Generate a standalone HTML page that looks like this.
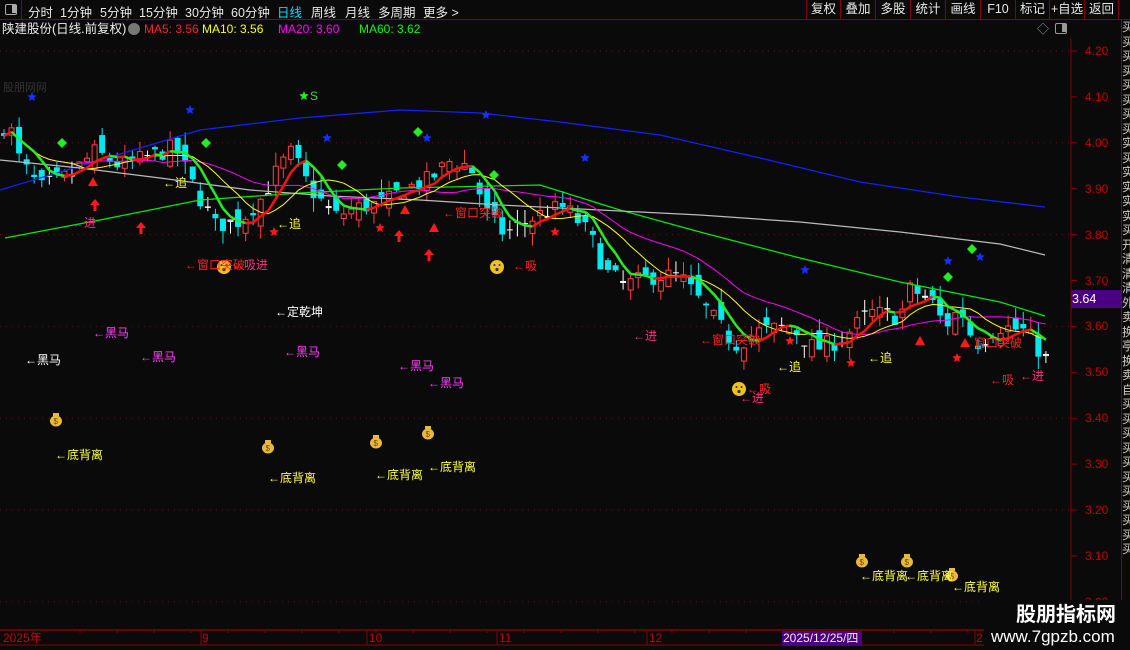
<!DOCTYPE html>
<html><head><meta charset="utf-8"><style>
*{margin:0;padding:0;box-sizing:border-box}
body{width:1130px;height:650px;background:#0a0a0a;overflow:hidden;position:relative;font-family:"Liberation Sans","Noto Sans CJK SC",sans-serif;font-size:12px;color:#ddd}
.top{position:absolute;left:0;top:0;width:1130px;height:20px;border-bottom:1px solid #8b0000}
.top span{position:absolute;top:2px;font-size:12.5px;color:#e8e8e8}
.rb{position:absolute;top:0;height:20px;border-left:1px solid #8b0000;color:#e8e8e8;font-size:12.5px;text-align:center;line-height:19px}
.a{position:absolute;white-space:nowrap;font-size:12px;line-height:12px}
.ax{position:absolute;left:1085px;color:#c00000;font-size:12px}
svg{position:absolute;left:0;top:0}
</style></head><body>
<div class="top">
<div style="position:absolute;left:0;top:0;width:22px;height:20px;border-right:1px solid #8b0000"><div style="position:absolute;left:5px;top:4px;width:12px;height:11px;border:1.5px solid #aaa;border-radius:2px"><div style="position:absolute;right:0;top:0;width:4px;height:8px;background:#aaa"></div></div></div>
<span style="left:28px">分时</span><span style="left:60px">1分钟</span><span style="left:100px">5分钟</span><span style="left:139px">15分钟</span><span style="left:185px">30分钟</span><span style="left:231px">60分钟</span><span style="left:277px;color:#00e0ff">日线</span><span style="left:311px">周线</span><span style="left:345px">月线</span><span style="left:378px">多周期</span><span style="left:423px">更多 &gt;</span>
<div class="rb" style="left:806px;width:34px">复权</div><div class="rb" style="left:840px;width:35px">叠加</div><div class="rb" style="left:875px;width:35px">多股</div><div class="rb" style="left:910px;width:35px">统计</div><div class="rb" style="left:945px;width:35px">画线</div><div class="rb" style="left:980px;width:35px">F10</div><div class="rb" style="left:1015px;width:34px">标记</div><div class="rb" style="left:1049px;width:35px">+自选</div><div class="rb" style="left:1084px;width:35px;border-right:1px solid #8b0000">返回</div>
</div>
<div class="a" style="left:2px;top:23px;font-size:12.5px;color:#eee">陕建股份(日线.前复权)</div>
<div style="position:absolute;left:128px;top:23px;width:12px;height:12px;border-radius:50%;background:#777"></div>
<div class="a" style="left:144px;top:23px;color:#ff2020">MA5: 3.56</div>
<div class="a" style="left:202px;top:23px;color:#ffff00">MA10: 3.56</div>
<div class="a" style="left:278px;top:23px;color:#ff00ff">MA20: 3.60</div>
<div class="a" style="left:359px;top:23px;color:#00ff00">MA60: 3.62</div>
<div class="a" style="left:1037px;top:23px;color:#999;font-size:12px">◇</div>
<div style="position:absolute;left:1055px;top:23px;width:12px;height:11px;border:1.5px solid #999;border-radius:2px"><div style="position:absolute;right:0;top:0;width:4px;height:8px;background:#999"></div></div>
<div class="a" style="left:3px;top:82px;color:#333;font-size:11px">股朋网网</div>
<svg id="s" width="1130" height="650"></svg>
<div id="lab"></div>
<div style="position:absolute;left:1071px;top:290px;width:50px;height:18px;background:#4b0082;color:#fff;font-size:12.5px;padding:2px 0 0 1px">3.64</div>
<div style="position:absolute;left:1121px;top:20px;width:9px;height:610px;border-left:1px solid #8b0000;overflow:hidden;color:#ccc;font-size:12px;line-height:14.5px">
<div style="width:14px">买买买买买买买买实买实实实实买开清清清外卖换亭换卖自买买买买买买买买买买买</div></div>
<div class="a" style="left:782px;top:631px;width:80px;height:15px;background:#4b0082;color:#eee;line-height:15px;padding-left:1px">2025/12/25/四</div>
<div style="position:absolute;left:984px;top:600px;width:146px;height:50px;background:#0a0a0a"></div>
<div class="a" style="left:1016px;top:604px;color:#fff;font-size:20px;line-height:22px;font-weight:bold">股朋指标网</div>
<div class="a" style="left:991px;top:627px;color:#fff;font-size:17px;line-height:20px">www.7gpzb.com</div>
<script>
const S=document.getElementById('s');let h='';
const Y=p=>51+(4.20-p)*459;
// grid dotted
[4.2,4.0,3.8,3.6,3.4,3.2,3.0].forEach(p=>{h+=`<line x1="0" x2="1070" y1="${Y(p)}" y2="${Y(p)}" stroke="#8b0000" stroke-dasharray="1 5"/>`});
h+=`<line x1="1071" x2="1071" y1="38" y2="630" stroke="#8b0000"/>`;
for(let p=3.0;p<=4.21;p+=0.1){h+=`<line x1="1071" x2="1077" y1="${Y(p)}" y2="${Y(p)}" stroke="#8b0000"/>`}
h+=`<line x1="0" x2="1071" y1="630" y2="630" stroke="#8b0000" stroke-width="1.5"/><line x1="0" x2="1121" y1="645" y2="645" stroke="#8b0000"/>`;
[201,367,497,647,975].forEach(x=>h+=`<line x1="${x}" x2="${x}" y1="630" y2="645" stroke="#8b0000"/>`);
for(let x=80;x<980;x+=37)h+=`<line x1="${x}" x2="${x}" y1="630" y2="633" stroke="#8b0000"/>`;
const pts=[[0,4.02],[8,4.05],[20,3.96],[40,3.9],[70,3.93],[95,3.98],[120,3.95],[150,3.97],[175,3.99],[195,3.9],[215,3.82],[240,3.83],[262,3.88],[280,3.95],[292,3.98],[310,3.9],[335,3.84],[360,3.86],[385,3.87],[405,3.9],[430,3.92],[450,3.96],[470,3.95],[488,3.84],[505,3.8],[520,3.82],[545,3.85],[565,3.86],[590,3.8],[605,3.72],[625,3.69],[655,3.71],[680,3.71],[705,3.64],[735,3.56],[760,3.59],[790,3.6],[815,3.55],[840,3.57],[870,3.63],[900,3.62],[910,3.68],[930,3.66],[945,3.6],[960,3.64],[975,3.56],[1000,3.6],[1025,3.59],[1045,3.53]];
function ip(x){for(let i=1;i<pts.length;i++)if(x<=pts[i][0]){const a=pts[i-1],b=pts[i],t=(x-a[0])/(b[0]-a[0]);return a[1]+(b[1]-a[1])*t}return pts[pts.length-1][1]}
let sd=7;const R=()=>{sd=(sd*16807)%2147483647;return sd/2147483647};
const C=[],X=[];let prev=4.0;
for(let i=0;i<139;i++){const x=4+i*7.55;X.push(x);const c=ip(x)+(R()-0.5)*0.04;const o=prev+(R()-0.5)*0.05;const hi=Math.max(o,c)+R()*0.03,lo=Math.min(o,c)-R()*0.03;prev=c;C.push(c);
const up=c>=o;const col=Math.abs(c-o)<0.004?'#fff':(up?'#ff4040':'#00e8f0');
h+=`<line x1="${x}" x2="${x}" y1="${Y(hi)}" y2="${Y(lo)}" stroke="${col}"/>`;
const t=Y(Math.max(o,c)),b=Y(Math.min(o,c));
if(up)h+=`<rect x="${x-2.5}" y="${t}" width="5" height="${Math.max(1,b-t)}" fill="#0a0a0a" stroke="${col}"/>`;else h+=`<rect x="${x-3}" y="${t}" width="6" height="${Math.max(1,b-t)}" fill="${col}"/>`;}
function ma(n){return C.map((v,i)=>{const s=C.slice(Math.max(0,i-n+1),i+1);return s.reduce((a,b)=>a+b)/s.length})}
const line=(arr,col,w)=>`<polyline fill="none" stroke="${col}" stroke-width="${w}" points="${arr.map(p=>p[0]+','+p[1]).join(' ')}"/>`;
h+=line([[0,190],[100,160],[200,130],[300,118],[400,110],[480,113],[560,122],[660,135],[760,158],[860,182],[960,197],[1045,207]],'#1020ff',1.3);
h+=line([[5,238],[100,220],[200,200],[300,193],[400,188],[540,185],[620,210],[700,232],[800,258],[900,282],[1000,302],[1045,316]],'#00ee00',1.2);
h+=line([[0,160],[80,168],[160,178],[250,190],[330,196],[420,200],[500,205],[600,210],[700,215],[800,222],[900,232],[1000,244],[1045,255]],'#bbb',1.2);
const m20=ma(20),m10=ma(10),m5=ma(5);
h+=line(X.map((x,i)=>[x,Y(m20[i])]),'#ff00ff',1);
h+=line(X.map((x,i)=>[x,Y(m10[i])]),'#ffff00',1);
for(let i=1;i<X.length;i++){h+=`<line x1="${X[i-1]}" y1="${Y(m5[i-1])}" x2="${X[i]}" y2="${Y(m5[i])}" stroke="${m5[i]>=m5[i-1]?'#ff1010':'#22ee22'}" stroke-width="2.5"/>`}
const star=(x,y,c,r=5)=>{let p='';for(let k=0;k<10;k++){const a=-Math.PI/2+k*Math.PI/5,rr=k%2?r*0.45:r;p+=(x+rr*Math.cos(a))+','+(y+rr*Math.sin(a))+' '}return `<polygon points="${p}" fill="${c}"/>`};
[[32,97],[190,110],[327,138],[427,138],[486,115],[585,158],[805,270],[948,261],[980,257]].forEach(p=>h+=star(p[0],p[1],'#1530ff'));
h+=star(304,96,'#22ee22');
[[274,232],[380,228],[555,232],[790,341],[851,363],[957,358]].forEach(p=>h+=star(p[0],p[1],'#ff1a1a'));
[[62,143],[206,143],[342,165],[418,132],[494,175],[948,277],[972,249]].forEach(p=>h+=`<polygon points="${p[0]},${p[1]-5} ${p[0]+5},${p[1]} ${p[0]},${p[1]+5} ${p[0]-5},${p[1]}" fill="#22ee22"/>`);
[[93,182],[405,210],[434,228],[920,341],[965,343]].forEach(p=>h+=`<polygon points="${p[0]},${p[1]-5} ${p[0]+5},${p[1]+4} ${p[0]-5},${p[1]+4}" fill="#ff1a1a"/>`);
[[95,205],[141,228],[399,236],[429,255]].forEach(p=>h+=`<polygon points="${p[0]},${p[1]-6} ${p[0]+5},${p[1]} ${p[0]+1.5},${p[1]} ${p[0]+1.5},${p[1]+6} ${p[0]-1.5},${p[1]+6} ${p[0]-1.5},${p[1]} ${p[0]-5},${p[1]}" fill="#ff1a1a"/>`);
[[224,267],[497,267],[739,389]].forEach(p=>h+=`<circle cx="${p[0]}" cy="${p[1]}" r="7" fill="#f0c020"/><circle cx="${p[0]-2.5}" cy="${p[1]-2}" r="1" fill="#333"/><circle cx="${p[0]+2.5}" cy="${p[1]-2}" r="1" fill="#333"/><circle cx="${p[0]}" cy="${p[1]+2.5}" r="1.6" fill="#333"/>`);
[[56,420],[268,447],[376,442],[428,433],[862,561],[907,561],[952,575]].forEach(p=>h+=`<ellipse cx="${p[0]}" cy="${p[1]+1}" rx="6" ry="5.5" fill="#e8b840"/><rect x="${p[0]-3}" y="${p[1]-7}" width="6" height="3" fill="#e8b840"/><text x="${p[0]-2.5}" y="${p[1]+4}" font-size="8" fill="#7a4a00" font-family="Liberation Sans">$</text>`);
S.innerHTML=h;
const L=[['←黑马',25,354,'#fff'],['←黑马',93,327,'#ff40ff'],['←黑马',140,351,'#ff40ff'],['←黑马',284,346,'#ff40ff'],['←黑马',398,360,'#ff40ff'],['←黑马',428,377,'#ff40ff'],
['←进',72,217,'#ff3080'],['←追',163,177,'#ffff40'],['←追',277,218,'#ffff40'],['←追',777,361,'#ffff40'],['←追',868,352,'#ffff40'],
['←窗口突破',185,259,'#ff2020'],['←吸进',232,259,'#ff3080'],['←定乾坤',275,306,'#fff'],['←吸',513,260,'#ff2020'],['←窗口突破',443,207,'#ff2020'],
['←进',633,330,'#ff3080'],['←窗口突破',700,334,'#ff2020'],['←吸',747,383,'#ff2020'],['←进',740,392,'#ff3080'],['←窗口突破',962,337,'#ff2020'],['←吸',990,374,'#ff2020'],['←进',1020,370,'#ff3080'],
['←底背离',55,449,'#ffff40'],['←底背离',268,472,'#ffff40'],['←底背离',375,469,'#ffff40'],['←底背离',428,461,'#ffff40'],['←底背离',860,570,'#ffff40'],['←底背离',905,570,'#ffff40'],['←底背离',952,581,'#ffff40'],
['S',310,90,'#22ee22']];
let t='';L.forEach(l=>t+=`<div class="a" style="left:${l[1]}px;top:${l[2]}px;color:${l[3]}">${l[0]}</div>`);
for(let p=3.0;p<=4.21;p+=0.1)t+=`<div class="ax" style="top:${Y(p)-7}px">${p.toFixed(2)}</div>`;
[['2025年',3],['9',202],['10',369],['11',499],['12',649],['2',976]].forEach(d=>t+=`<div class="a" style="left:${d[1]}px;top:632px;color:#c00000">${d[0]}</div>`);
document.getElementById('lab').innerHTML=t;
</script>
</body></html>
